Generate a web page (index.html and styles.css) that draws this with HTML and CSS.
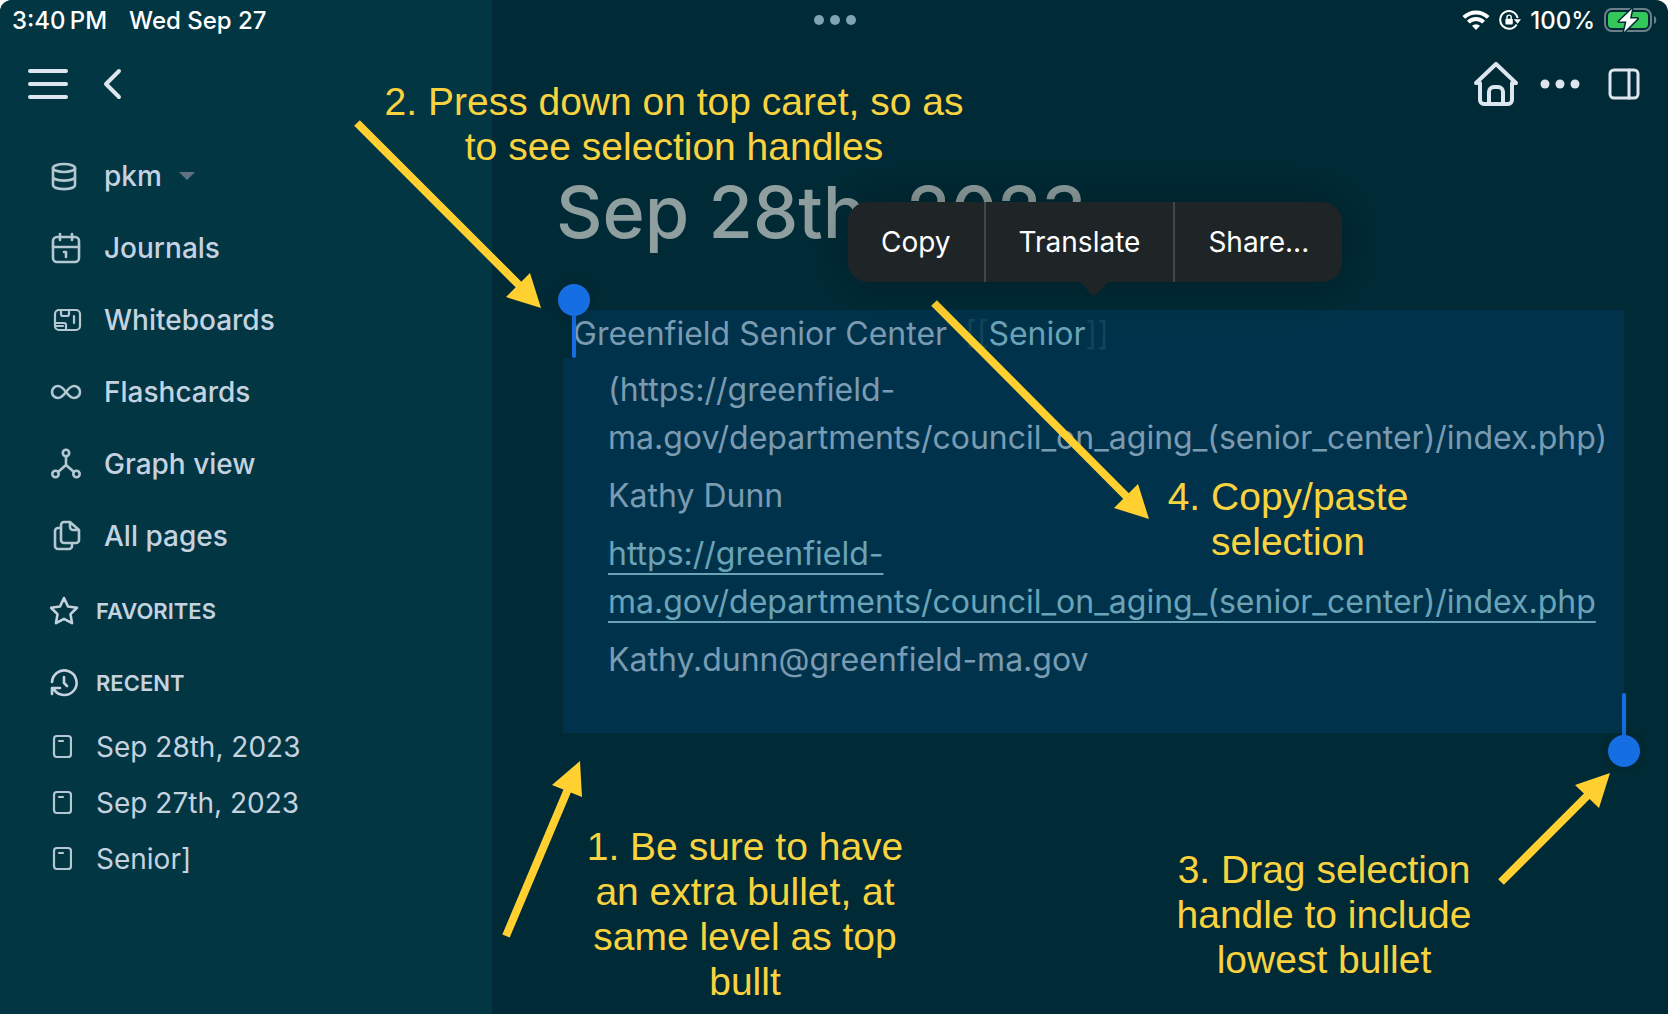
FILE: index.html
```html
<!DOCTYPE html>
<html lang="en">
<head>
    <meta charset="UTF-8">
    <meta name="viewport" content="width=device-width, initial-scale=1.0">
    <title>Sep 28th, 2023</title>
    <link rel="stylesheet" href="styles.css">
</head>
<body>
    <div class="app">
        <header class="status-bar">
            <div class="status-left">
                <span>3:40&thinsp;PM</span>
                <span>Wed Sep 27</span>
            </div>
            <svg class="status-dots" width="44" height="12" viewBox="0 0 44 12" fill="#7fa3b3">
                <circle cx="6" cy="6" r="5"/><circle cx="22" cy="6" r="5"/><circle cx="38" cy="6" r="5"/>
            </svg>
            <div class="status-right">
                <svg width="28" height="20" viewBox="0 0 28 20" fill="none" stroke="#fff" stroke-width="4">
                    <path d="M1.8 7.4a17.4 17.4 0 0 1 24.4 0"/>
                    <path d="M6.4 12.2a10.8 10.8 0 0 1 15.2 0"/>
                    <path d="M14 20l-4-4.2a5.8 5.8 0 0 1 8 0z" fill="#fff" stroke="none"/>
                </svg>
                <svg width="22" height="22" viewBox="0 0 22 22" fill="none" stroke="#fff" stroke-width="2">
                    <path d="M17.6 15.4A8.8 8.8 0 1 1 18.6 9"/>
                    <path d="M14.8 10.2h7.2l-3.4 4.6z" fill="#fff" stroke="none"/>
                    <rect x="6.4" y="9.8" width="7.4" height="5.6" rx="1" fill="#fff" stroke="none"/>
                    <path d="M8 10V8.2a2.1 2.1 0 0 1 4.2 0V10" stroke-width="1.4"/>
                </svg>
                <span>100%</span>
                <svg width="54" height="26" viewBox="0 0 54 26">
                    <rect x="1" y="2" width="46" height="22" rx="7" fill="none" stroke="#6b8088" stroke-width="2"/>
                    <rect x="4" y="5" width="40" height="16" rx="4" fill="#34c759"/>
                    <path d="M50 9c3 1 3 7 0 8z" fill="#6b8088"/>
                    <path d="M28 2L15 14.6h7.5L20 25 33.500 11.6H26z" fill="#fff" stroke="#002b36" stroke-width="3" stroke-linejoin="round" paint-order="stroke"/>
                </svg>
            </div>
        </header>

        <div class="toolbar">
            <div class="toolbar-group">
                <button class="icon-button" aria-label="Toggle menu">
                    <svg width="40" height="40" viewBox="0 0 40 40" stroke-width="4">
                        <path d="M2 7h36M2 20h36M2 33h36"/>
                    </svg>
                </button>
                <button class="icon-button" aria-label="Go back">
                    <svg width="40" height="40" viewBox="0 0 40 40" stroke-width="4">
                        <path d="M23 7L10 20l13 13"/>
                    </svg>
                </button>
            </div>
            <div class="toolbar-group toolbar-right">
                <button class="icon-button" aria-label="Home">
                    <svg width="44" height="44" viewBox="0 0 44 44" stroke-width="4">
                        <path d="M6 21H2L22 2l20 19h-4v17a4 4 0 0 1-4 4H10a4 4 0 0 1-4-4z"/>
                        <path d="M15 42V30a5 5 0 0 1 5-5h4a5 5 0 0 1 5 5v12"/>
                    </svg>
                </button>
                <button class="icon-button" aria-label="More">
                    <svg width="40" height="40" viewBox="0 0 40 40" class="solid">
                        <circle cx="5" cy="20" r="4.5"/><circle cx="20" cy="20" r="4.5"/><circle cx="35" cy="20" r="4.5"/>
                    </svg>
                </button>
                <button class="icon-button" aria-label="Toggle right sidebar">
                    <svg width="32" height="32" viewBox="0 0 32 32" stroke-width="3">
                        <rect x="2" y="2" width="28" height="28" rx="4"/><path d="M21 2v28"/>
                    </svg>
                </button>
            </div>
        </div>

        <aside class="sidebar">
            <nav class="nav">
                <a href="#" class="nav-item">
                    <svg width="32" height="32" viewBox="0 0 32 32">
                        <ellipse cx="14" cy="8" rx="11" ry="4"/>
                        <path d="M3 8v17c0 5.5 22 5.5 22 0V8M3 16.500c0 5.5 22 5.5 22 0"/>
                    </svg>
                    <span>pkm</span>
                    <svg class="caret" width="16" height="8" viewBox="0 0 16 8"><path d="M0 0h16L8 8z"/></svg>
                </a>
                <a href="#" class="nav-item">
                    <svg width="32" height="32" viewBox="0 0 32 32">
                        <rect x="3" y="5" width="26" height="25" rx="4"/>
                        <path d="M3 15h26M10 2v6M22 2v6M14 20h2v5"/>
                    </svg>
                    <span>Journals</span>
                </a>
                <a href="#" class="nav-item">
                    <svg class="thin" width="32" height="32" viewBox="0 0 32 32">
                        <rect x="5" y="6" width="25" height="20" rx="4"/>
                        <path d="M11 6v4q0 2 2 2h4q2 0 2-2V6M5 19h9q2 0 2 2v5M6 22h7M24 12v7"/>
                    </svg>
                    <span>Whiteboards</span>
                </a>
                <a href="#" class="nav-item">
                    <svg width="32" height="32" viewBox="0 0 32 32">
                        <path d="M16 16c-3 4-5 6-8 6a6 6 0 0 1 0-12c3 0 5 2 8 6s5 6 8 6a6 6 0 0 0 0-12c-3 0-5 2-8 6z"/>
                    </svg>
                    <span>Flashcards</span>
                </a>
                <a href="#" class="nav-item">
                    <svg width="32" height="32" viewBox="0 0 32 32">
                        <circle cx="16" cy="5" r="3.2"/><circle cx="5.5" cy="26" r="3.2"/><circle cx="26.5" cy="26" r="3.2"/>
                        <path d="M16 8v9M8 24l8-7 8 7"/>
                    </svg>
                    <span>Graph view</span>
                </a>
                <a href="#" class="nav-item">
                    <svg width="32" height="32" viewBox="0 0 32 32">
                        <path d="M20 2h-6a3 3 0 0 0-3 3v15a3 3 0 0 0 3 3h12a3 3 0 0 0 3-3V10zM20 2v5a3 3 0 0 0 3 3h5"/>
                        <path d="M11 8H8a3 3 0 0 0-3 3v15a3 3 0 0 0 3 3h11a3 3 0 0 0 3-3v-3"/>
                    </svg>
                    <span>All pages</span>
                </a>
            </nav>

            <h2 class="section-title">
                <svg width="32" height="32" viewBox="0 0 32 32">
                    <path d="M14 3l4 8.5 9 1.3-6.5 6.3 1.5 9-8-4.3-8 4.3 1.5-9L1 12.8l9-1.3z"/>
                </svg>
                Favorites
            </h2>
            <h2 class="section-title">
                <svg width="32" height="32" viewBox="0 0 32 32">
                    <path d="M2 15A12.300 12.300 0 1 1 4 22.500M2 27v-6h8M14 10v6l3 3"/>
                </svg>
                Recent
            </h2>
            <ul class="recent-list">
                <li>
                    <a href="#">
                        <svg width="20" height="26" viewBox="0 0 20 26"><rect x="2" y="2" width="17" height="21" rx="3"/><path d="M7 7h4"/></svg>
                        Sep 28th, 2023
                    </a>
                </li>
                <li>
                    <a href="#">
                        <svg width="20" height="26" viewBox="0 0 20 26"><rect x="2" y="2" width="17" height="21" rx="3"/><path d="M7 7h4"/></svg>
                        Sep 27th, 2023
                    </a>
                </li>
                <li>
                    <a href="#">
                        <svg width="20" height="26" viewBox="0 0 20 26"><rect x="2" y="2" width="17" height="21" rx="3"/><path d="M7 7h4"/></svg>
                        Senior]
                    </a>
                </li>
            </ul>
        </aside>

        <main class="page">
            <h1>Sep 28th, 2023</h1>
            <div class="selection">
                <p class="block-top">Greenfield Senior Center &nbsp;<span class="bracket">[[</span><a href="#" class="page-ref">Senior</a><span class="bracket">]]</span></p>
                <div class="block-children">
                    <p>(https://greenfield-<br>ma.gov/departments/council_on_aging_(senior_center)/index.php)</p>
                    <p>Kathy Dunn</p>
                    <p><a href="#" class="external">https://greenfield-<br>ma.gov/departments/council_on_aging_(senior_center)/index.php</a></p>
                    <p>Kathy.dunn@greenfield-ma.gov</p>
                </div>
                <span class="handle handle-start"></span>
                <span class="handle handle-end"></span>
            </div>
        </main>

        <!-- tutorial notes drawn over the app -->
        <svg class="arrows" width="1668" height="1014" viewBox="0 0 1668 1014">
            <path d="M357 123L520 286M934 303l193 194M506 936l62-147M1501 882l88-88"/>
            <path class="head" d="M541 308l-11-35-24 24zM1149 519l-11-35-24 24zM580 761l-28 24 30 12zM1610 773l-35 12 24 23z"/>
        </svg>
        <p class="note note-press">2. Press down on top caret, so as<br>to see selection handles</p>
        <p class="note note-bullet">1. Be sure to have<br>an extra bullet, at<br>same level as top<br>bullt</p>
        <p class="note note-drag">3. Drag selection<br>handle to include<br>lowest bullet</p>
        <p class="note note-copy">4. Copy/paste<br>selection</p>

        <div class="edit-menu">
            <button>Copy</button>
            <button>Translate</button>
            <button>Share...</button>
            <svg class="pointer" width="40" height="16" viewBox="0 0 40 16"><path d="M0 0h40c-6 0-8 3-10 5l-7 8q-3 3-6 0l-7-8C8 3 6 0 0 0z"/></svg>
        </div>
    </div>
</body>
</html>
```

FILE: styles.css
```css
* {
    box-sizing: border-box;
}
body {
    margin: 0;
    background-color: white;
    font-family: Inter, sans-serif;
    color: #c5d3e0;
}
h1, h2, p, ul {
    margin: 0;
    padding: 0;
}
a {
    color: inherit;
    text-decoration: none;
}
button {
    border: none;
    background: none;
    padding: 0;
    font-family: inherit;
    color: inherit;
    cursor: pointer;
}
svg {
    display: block;
    flex-shrink: 0;
}
.app {
    position: relative;
    display: grid;
    grid-template-columns: 492px 1fr;
    grid-template-rows: 40px 88px 1fr;
    min-height: 100vh;
    background-color: #002b36;
    border-radius: 12px 12px 0 0;
    overflow: hidden;
}

/* status bar */
.status-bar {
    grid-column: 1 / 3;
    grid-row: 1;
    z-index: 1;
    display: grid;
    grid-template-columns: 1fr auto 1fr;
    align-items: center;
    padding: 0 10px 0 12px;
    font-size: 24px;
    font-weight: 500;
    color: white;
}
.status-left {
    display: flex;
    gap: 22px;
}
.status-right {
    display: flex;
    align-items: center;
    justify-content: flex-end;
    gap: 9px;
}

/* toolbar */
.toolbar {
    grid-column: 1 / 3;
    grid-row: 2;
    z-index: 1;
    display: flex;
    justify-content: space-between;
    align-items: center;
    padding: 0 28px;
}
.toolbar-group {
    display: flex;
    align-items: center;
    gap: 28px;
}
.toolbar-right {
    gap: 22px;
}
.toolbar-right .icon-button:last-child {
    margin-left: 6px;
}
.icon-button svg {
    fill: none;
    stroke: #dde5ef;
    stroke-linecap: round;
    stroke-linejoin: round;
}
.icon-button svg.solid {
    fill: #dde5ef;
    stroke: none;
}

/* left sidebar */
.sidebar {
    grid-column: 1;
    grid-row: 1 / 4;
    background-color: #023643;
    padding: 140px 50px 0;
}
.sidebar svg {
    fill: none;
    stroke: #b4c8d2;
    stroke-width: 2.6;
    stroke-linecap: round;
    stroke-linejoin: round;
}
.sidebar .thin {
    stroke-width: 2.2;
}
.nav {
    margin-bottom: 3px;
}
.nav-item {
    display: flex;
    align-items: center;
    gap: 22px;
    height: 72px;
    font-size: 28px;
    font-weight: 500;
}
.sidebar .caret {
    fill: #5f7383;
    stroke: none;
    margin-left: -5px;
}
.section-title {
    display: flex;
    align-items: center;
    gap: 14px;
    height: 72px;
    font-size: 22px;
    font-weight: 600;
    text-transform: uppercase;
}
.section-title svg {
    stroke: #c5d3e0;
}
.recent-list {
    list-style: none;
}
.recent-list a {
    display: flex;
    align-items: center;
    gap: 24px;
    height: 56px;
    padding-left: 2px;
    font-size: 28px;
}
.sidebar .recent-list svg {
    stroke-width: 2.2;
}

/* journal page */
.page {
    grid-column: 2;
    grid-row: 3;
    padding: 40px 44px 0 64px;
}
h1 {
    font-size: 72px;
    line-height: 88px;
    font-weight: 500;
    color: #8f9f9f;
}
.selection {
    position: relative;
    margin: 54px 0 0 7px;
    font-size: 32px;
    line-height: 48px;
    color: #7a9bb2;
}
.block-top {
    margin-left: 10px;
    background-color: #00334b;
}
.block-children {
    display: flex;
    flex-direction: column;
    gap: 10px;
    padding: 8px 0 49px 45px;
    background-color: #00334b;
    white-space: nowrap;
}
.bracket {
    color: #16435a;
}
.page-ref, .external {
    color: #6ba3b8;
}
.external {
    text-decoration: underline;
    text-decoration-thickness: 2px;
    text-decoration-skip-ink: none;
    text-underline-offset: 8px;
}
.handle {
    position: absolute;
    width: 4px;
    height: 44px;
    border-radius: 2px;
    background-color: #156fe2;
}
.handle::after {
    content: "";
    position: absolute;
    left: -14px;
    width: 32px;
    height: 32px;
    border-radius: 50%;
    background-color: #156fe2;
    box-shadow: 0 0 16px rgba(0, 0, 0, 0.2);
}
.handle-start {
    top: 4px;
    left: 9px;
}
.handle-start::after {
    bottom: 42px;
}
.handle-end {
    bottom: -4px;
    right: -2px;
}
.handle-end::after {
    top: 42px;
}

/* yellow notes and arrows */
.arrows {
    position: absolute;
    top: 0;
    left: 0;
    fill: none;
    stroke: #ffd02f;
    stroke-width: 8;
    pointer-events: none;
}
.arrows .head {
    fill: #ffd02f;
    stroke: none;
}
.note {
    position: absolute;
    font-family: "Liberation Sans", Arial, sans-serif;
    font-size: 39px;
    line-height: 45px;
    text-align: center;
    white-space: nowrap;
    color: #f9d33f;
    transform: translateX(-50%);
}
.note-press {
    top: 79px;
    left: 674px;
}
.note-bullet {
    top: 824px;
    left: 745px;
}
.note-drag {
    top: 847px;
    left: 1324px;
}
.note-copy {
    top: 474px;
    left: 1288px;
}

/* text selection popover */
.edit-menu {
    position: absolute;
    top: 202px;
    left: 848px;
    display: flex;
    height: 80px;
    border-radius: 20px;
    background-color: #1f2427;
    box-shadow: 0 0 50px rgba(0, 0, 0, 0.3);
}
.edit-menu button {
    padding: 0 33px;
    font-size: 28px;
    color: white;
}
.edit-menu button + button {
    border-left: 2px solid #41474a;
}
.pointer {
    position: absolute;
    top: 79px;
    left: 226px;
    fill: #1f2427;
}
```
